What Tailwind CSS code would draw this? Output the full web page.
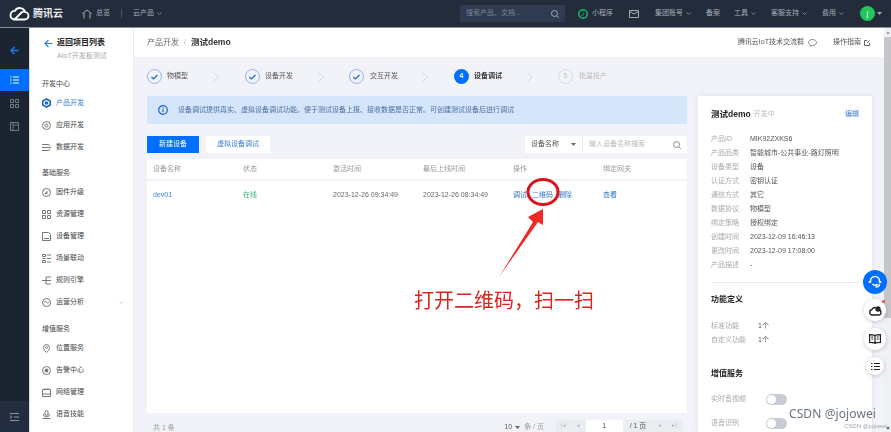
<!DOCTYPE html>
<html lang="zh-CN">
<head>
    <meta charset="UTF-8">
    <title>设备调试 - 腾讯云</title>
    <script src="https://cdn.jsdelivr.net/npm/@tailwindcss/browser@4"></script>
</head>
<body class="bg-[#f1f3f8]">
<div class="relative w-[891px] h-[432px] overflow-hidden flex flex-col whitespace-nowrap blur-[0.4px] font-['Liberation_Sans','Noto_Sans_CJK_SC',sans-serif] text-[7px] text-[#444]">

    <!-- top bar -->
    <header class="h-[28px] shrink-0 flex items-center bg-[#232c3b] border-b border-[#8a9099] text-[#a5acb8]">
        <svg class="ml-[9px] w-[21px] h-[15px] shrink-0" viewBox="0 0 21 15" fill="none" stroke="#fff" stroke-width="1.8"><path d="M5 13.500h10.500a3.700 3.700 0 0 0 .6-7.400A5.500 5.500 0 0 0 6 4.800 4.400 4.400 0 0 0 5 13.500zM5.500 13.500l7-7a3.500 3.500 0 0 1 4-.4"/></svg>
        <span class="ml-[3px] text-[10px] font-semibold text-[#e8eaee]">腾讯云</span>
        <svg class="ml-[19px] w-[10px] h-[10px] shrink-0" viewBox="0 0 10 10" fill="none" stroke="#a5acb8"><path d="M.5 4.500 5 1l4.500 3.500M2 4v5.500M8 4v5.500"/></svg>
        <span class="ml-[4px] w-[25px]">总览</span>
        <span class="w-px h-[9px] bg-[#4c5666]"></span>
        <span class="ml-[11px]">云产品</span>
        <svg class="ml-[3px] w-[5px] h-[3px] shrink-0" viewBox="0 0 5 3" fill="none" stroke="#7b8594"><path d="m.5.500 2 2 2-2"/></svg>
        <div class="ml-[298px] w-[105px] h-[17px] shrink-0 px-[6px] flex items-center justify-between bg-[#2f3b50] text-[#7b8594]">
            <span>搜索产品、文档...</span>
            <svg class="w-[8px] h-[8px]" viewBox="0 0 8 8" fill="none" stroke="#a5acb8"><circle cx="3.500" cy="3.500" r="3"/><path d="m5.800 5.800 2 2"/></svg>
        </div>
        <svg class="ml-[13px] w-[10px] h-[10px] shrink-0" viewBox="0 0 10 10" fill="none"><circle cx="5" cy="5" r="4.200" stroke="#17b26a" stroke-width="1.600"/><path d="M3.300 6.200c1.500.5 3-1 2.500-2.400" stroke="#17b26a"/></svg>
        <span class="ml-[4px]">小程序</span>
        <svg class="ml-[16px] w-[10px] h-[8px] shrink-0" viewBox="0 0 10 8" fill="none" stroke="#a5acb8"><path d="M.5.500h9v7h-9zM.5 1.500l4.500 2.500 4.500-2.500"/></svg>
        <span class="ml-[16px]">集团账号</span>
        <svg class="ml-[3px] w-[5px] h-[3px] shrink-0" viewBox="0 0 5 3" fill="none" stroke="#7b8594"><path d="m.5.500 2 2 2-2"/></svg>
        <span class="ml-[15px]">备案</span>
        <span class="ml-[14px]">工具</span>
        <svg class="ml-[3px] w-[5px] h-[3px] shrink-0" viewBox="0 0 5 3" fill="none" stroke="#7b8594"><path d="m.5.500 2 2 2-2"/></svg>
        <span class="ml-[15px]">客服支持</span>
        <svg class="ml-[3px] w-[5px] h-[3px] shrink-0" viewBox="0 0 5 3" fill="none" stroke="#7b8594"><path d="m.5.500 2 2 2-2"/></svg>
        <span class="ml-[15px]">费用</span>
        <svg class="ml-[3px] w-[5px] h-[3px] shrink-0" viewBox="0 0 5 3" fill="none" stroke="#7b8594"><path d="m.5.500 2 2 2-2"/></svg>
        <span class="ml-[16px] w-[15px] h-[15px] shrink-0 rounded-full bg-[#22c55e] text-white text-[8px] flex items-center justify-center">j</span>
        <svg class="ml-[2px] w-[5px] h-[3px] shrink-0" viewBox="0 0 5 3" fill="#a5acb8"><path d="M0 0h5L2.500 3z"/></svg>
    </header>

    <div class="flex-1 flex min-h-0">
        <!-- icon rail -->
        <nav class="w-[30px] shrink-0 flex flex-col bg-[#1b2431] border-r border-[#d9dce2]">
            <div class="h-[41px] flex items-center justify-center pt-[3px]">
                <svg class="w-[9px] h-[9px]" viewBox="0 0 9 9" fill="none" stroke="#1f7cf0" stroke-width="1.500"><path d="M8.500 4.500H1M4.500 1 1 4.500 4.500 8"/></svg>
            </div>
            <div class="h-[22px] flex items-center justify-center bg-[#006eff]">
                <svg class="w-[9px] h-[8px]" viewBox="0 0 9 8" fill="none" stroke="#fff" stroke-width="1.200"><path d="M0 1h1.500M3 1h6M0 4h1.500M3 4h6M0 7h1.500M3 7h6"/></svg>
            </div>
            <div class="h-[22px] mt-px flex items-center justify-center">
                <svg class="w-[9px] h-[9px]" viewBox="0 0 9 9" fill="none" stroke="#737b88"><path d="M.5.500h3v3h-3zM5.500.500h3v3h-3zM.5 5.500h3v3h-3zM5.500 5.500h3v3h-3z"/></svg>
            </div>
            <div class="h-[24px] flex items-center justify-center">
                <svg class="w-[9px] h-[9px]" viewBox="0 0 9 9" fill="none" stroke="#737b88"><path d="M.5.500h8v8h-8zM3 .5v8M3 3h5.500"/></svg>
            </div>
            <div class="mt-auto h-[31px] flex items-center justify-center bg-[#222e3f]">
                <svg class="w-[9px] h-[8px]" viewBox="0 0 9 8" fill="none" stroke="#8d95a2"><path d="M0 .5h9M4 4h5M0 7.500h9M0 2.500 2 4 0 5.500"/></svg>
            </div>
        </nav>

        <!-- side menu -->
        <aside class="w-[104px] shrink-0 bg-white border-r border-[#e8eaee]">
            <div class="h-[48px] pl-[14px] pt-[9px]">
                <div class="h-[12px] flex items-center gap-[4px] text-[8px] text-[#222] font-semibold">
                    <svg class="w-[9px] h-[9px]" viewBox="0 0 9 9" fill="none" stroke="#2b7de9" stroke-width="1.200"><path d="M8.500 4.500H1M4.500 1 1 4.500 4.500 8"/></svg>
                    返回项目列表
                </div>
                <div class="h-[13px] mt-[1px] pl-[13px] flex items-center text-[#aaa]">AIoT开发板测试</div>
            </div>
            <div class="h-[16px] pl-[12px] flex items-center">开发中心</div>
            <a class="h-[22px] pl-[12px] flex items-center gap-[5px] text-[#3b7fd9]">
                <svg class="w-[9px] h-[10px]" viewBox="0 0 9 10" fill="none" stroke="#1767c9" stroke-width="1.600"><path d="M4.500 1 8.200 3v4L4.500 9 .8 7V3z"/><circle cx="4.500" cy="5" r="1"/></svg>
                产品开发
            </a>
            <a class="h-[22px] pl-[12px] flex items-center gap-[5px]">
                <svg class="w-[9px] h-[9px]" viewBox="0 0 9 9" fill="none" stroke="#777"><circle cx="4.500" cy="4.500" r="4"/><circle cx="4.500" cy="4.500" r="1.500"/></svg>
                应用开发
            </a>
            <a class="h-[22px] pl-[12px] flex items-center gap-[5px]">
                <svg class="w-[9px] h-[9px]" viewBox="0 0 9 9" fill="none" stroke="#777"><path d="M0 1.500h6l2 1M0 4.500h9M0 7.500h6l2-1"/></svg>
                数据开发
            </a>
            <div class="h-[15px] mt-[8px] pl-[12px] flex items-center">基础服务</div>
            <a class="h-[22px] pl-[12px] flex items-center gap-[5px]">
                <svg class="w-[9px] h-[9px]" viewBox="0 0 9 9" fill="none" stroke="#777"><circle cx="4.500" cy="4.500" r="4"/><path d="M3 5.500 5 3.500v2z"/></svg>
                固件升级
            </a>
            <a class="h-[22px] pl-[12px] flex items-center gap-[5px]">
                <svg class="w-[9px] h-[9px]" viewBox="0 0 9 9" fill="none" stroke="#777"><path d="M.5.500h3v3h-3zM5.500.500h3v3h-3zM.5 5.500h3v3h-3zM5.500 5.500h3v3h-3z"/></svg>
                资源管理
            </a>
            <a class="h-[22px] pl-[12px] flex items-center gap-[5px]">
                <svg class="w-[9px] h-[9px]" viewBox="0 0 9 9" fill="none" stroke="#777"><path d="M.5.500h6l2 2v6h-8zM2 6.500h5"/></svg>
                设备管理
            </a>
            <a class="h-[22px] pl-[12px] flex items-center gap-[5px]">
                <svg class="w-[9px] h-[9px]" viewBox="0 0 9 9" fill="none" stroke="#777"><path d="M.5.500h3v2h-3zM.5 6.500h3v2h-3zM5 1h4M5 4.500h4M5 8h4M.5 4.500h3"/></svg>
                场景联动
            </a>
            <a class="h-[22px] pl-[12px] flex items-center gap-[5px]">
                <svg class="w-[9px] h-[9px]" viewBox="0 0 9 9" fill="none" stroke="#777"><path d="M0 4.500h4M4 1v7M4 1h5M4 4.500h5M4 8h5"/></svg>
                规则引擎
            </a>
            <a class="h-[22px] pl-[12px] pr-[10px] flex items-center gap-[5px]">
                <svg class="w-[9px] h-[9px]" viewBox="0 0 9 9" fill="none" stroke="#777"><circle cx="4.500" cy="4.500" r="4"/><path d="m2 4.500 1.500-1 2 1.500 1.500-1"/></svg>
                运营分析
                <svg class="ml-auto w-[4px] h-[3px]" viewBox="0 0 5 3" fill="none" stroke="#bbb"><path d="m.5.500 2 2 2-2"/></svg>
            </a>
            <div class="h-[16px] mt-[8px] pl-[12px] flex items-center">增值服务</div>
            <a class="h-[22px] pl-[12px] flex items-center gap-[5px]">
                <svg class="w-[9px] h-[9px]" viewBox="0 0 9 9" fill="none" stroke="#777"><path d="M4.500 8.500C2.500 6.500 1.500 5 1.500 3.500a3 3 0 0 1 6 0C7.500 5 6.500 6.500 4.500 8.500z"/><circle cx="4.500" cy="3.500" r="1"/></svg>
                位置服务
            </a>
            <a class="h-[22px] pl-[12px] flex items-center gap-[5px]">
                <svg class="w-[9px] h-[9px]" viewBox="0 0 9 9" fill="none" stroke="#777"><circle cx="4.500" cy="4.500" r="4"/><circle cx="4.500" cy="4.500" r="1.500" fill="#777"/></svg>
                告警中心
            </a>
            <a class="h-[22px] pl-[12px] flex items-center gap-[5px]">
                <svg class="w-[9px] h-[9px]" viewBox="0 0 9 9" fill="none" stroke="#777"><path d="M.5 1.500h8v7h-8zM.5 6h8M3 0v1.500M6 0v1.500"/></svg>
                网络管理
            </a>
            <a class="h-[22px] pl-[12px] flex items-center gap-[5px]">
                <svg class="w-[9px] h-[9px]" viewBox="0 0 9 9" fill="none" stroke="#777"><rect x="3" y=".5" width="3" height="5" rx="1.500"/><path d="M1.500 4a3 3 0 0 0 6 0M.5 8.500h8"/></svg>
                语音技能
            </a>
        </aside>

        <main class="flex-1 min-w-0 flex flex-col">
            <!-- page header -->
            <div class="h-[29px] shrink-0 pl-[13px] pr-[14px] flex items-center bg-white">
                <span class="text-[8px] text-[#666]">产品开发</span>
                <span class="mx-[5px] text-[#aaa]">/</span>
                <span class="text-[8.500px] font-bold text-[#333]">测试demo</span>
                <span class="ml-auto text-[#555]">腾讯云IoT技术交流群</span>
                <svg class="ml-[4px] w-[9px] h-[8px]" viewBox="0 0 9 8" fill="none" stroke="#888"><path d="M4.500.5c2.200 0 4 1.300 4 3s-1.800 3-4 3l-2 1V6C1.300 5.500.5 4.600.5 3.500c0-1.700 1.800-3 4-3z"/></svg>
                <span class="ml-[16px] text-[#555]">操作指南</span>
                <svg class="ml-[3px] w-[6px] h-[6px]" viewBox="0 0 6 6" fill="none" stroke="#666"><path d="M3 .5H.5v5h5V3M3 3 5.500.5"/></svg>
            </div>

            <!-- stepper -->
            <div class="h-[39px] shrink-0 pl-[13px] flex items-center text-[#555]">
                <div class="w-[98px] flex items-center gap-[5px]">
                    <span class="w-[15px] h-[15px] rounded-full border border-[#8fb4e6] flex items-center justify-center"><svg class="w-[7px] h-[6px]" viewBox="0 0 7 6" fill="none" stroke="#1767c9" stroke-width="1.200"><path d="m.5 3 2 2L6.500 1"/></svg></span>
                    物模型
                    <svg class="ml-auto mr-[26px] w-[6px] h-[10px]" viewBox="0 0 6 10" fill="none" stroke="#d4d7de"><path d="m.5.500 5 4.500-5 4.500"/></svg>
                </div>
                <div class="w-[104px] flex items-center gap-[5px]">
                    <span class="w-[15px] h-[15px] rounded-full border border-[#8fb4e6] flex items-center justify-center"><svg class="w-[7px] h-[6px]" viewBox="0 0 7 6" fill="none" stroke="#1767c9" stroke-width="1.200"><path d="m.5 3 2 2L6.500 1"/></svg></span>
                    设备开发
                    <svg class="ml-auto mr-[25px] w-[6px] h-[10px]" viewBox="0 0 6 10" fill="none" stroke="#d4d7de"><path d="m.5.500 5 4.500-5 4.500"/></svg>
                </div>
                <div class="w-[105px] flex items-center gap-[6px]">
                    <span class="w-[15px] h-[15px] rounded-full border border-[#8fb4e6] flex items-center justify-center"><svg class="w-[7px] h-[6px]" viewBox="0 0 7 6" fill="none" stroke="#1767c9" stroke-width="1.200"><path d="m.5 3 2 2L6.500 1"/></svg></span>
                    交互开发
                    <svg class="ml-auto mr-[26px] w-[6px] h-[10px]" viewBox="0 0 6 10" fill="none" stroke="#d4d7de"><path d="m.5.500 5 4.500-5 4.500"/></svg>
                </div>
                <div class="w-[104px] flex items-center gap-[5px] font-semibold text-[#333]">
                    <span class="w-[15px] h-[15px] rounded-full bg-[#006eff] text-white flex items-center justify-center">4</span>
                    设备调试
                    <svg class="ml-auto mr-[25px] w-[6px] h-[10px]" viewBox="0 0 6 10" fill="none" stroke="#d4d7de"><path d="m.5.500 5 4.500-5 4.500"/></svg>
                </div>
                <div class="flex items-center gap-[6px] text-[#bbb]">
                    <span class="w-[15px] h-[15px] rounded-full border border-[#d4d7de] flex items-center justify-center">5</span>
                    批量投产
                </div>
            </div>

            <div class="flex-1 min-h-0 flex">
                <!-- device list -->
                <section class="w-[540px] ml-[13px] shrink-0 flex flex-col">
                    <div class="h-[28px] shrink-0 pl-[11px] flex items-center gap-[10px] bg-[#d5e6fb] text-[#4c6f9e]">
                        <svg class="w-[10px] h-[10px]" viewBox="0 0 10 10" fill="none" stroke="#1767c9" stroke-width="1.200"><circle cx="5" cy="5" r="4.300"/><path d="M5 4.300v3M5 2.300v1"/></svg>
                        设备调试提供真实、虚拟设备调试功能。便于测试设备上报、接收数据是否正常。可创建测试设备后进行调试
                    </div>
                    <div class="h-[17px] mt-[12px] shrink-0 flex items-stretch">
                        <button class="w-[52px] bg-[#006eff] text-white">新建设备</button>
                        <button class="w-[64px] ml-[7px] bg-white text-[#3b7fd9]">虚拟设备调试</button>
                        <div class="ml-auto w-[58px] px-[6px] flex items-center justify-between bg-white border-r border-[#e8eaee] text-[#555]">设备名称
                            <svg class="w-[5px] h-[3px]" viewBox="0 0 5 3" fill="#666"><path d="M0 0h5L2.500 3z"/></svg>
                        </div>
                        <div class="w-[104px] px-[6px] flex items-center justify-between bg-white text-[#bbb]">输入设备名称搜索
                            <svg class="w-[8px] h-[8px]" viewBox="0 0 8 8" fill="none" stroke="#888"><circle cx="3.500" cy="3.500" r="3"/><path d="m5.800 5.800 2 2"/></svg>
                        </div>
                    </div>
                    <div class="h-[254px] mt-[6px] shrink-0 bg-white">
                        <div class="h-[22px] pl-[6px] grid grid-cols-[90px_90px_90px_90px_90px_1fr] items-center border-b-2 border-[#f1f3f8] text-[#999]">
                            <span>设备名称</span><span>状态</span><span>激活时间</span><span>最后上线时间</span><span>操作</span><span>绑定网关</span>
                        </div>
                        <div class="h-[28px] pl-[6px] grid grid-cols-[90px_90px_90px_90px_90px_1fr] items-center text-[#666]">
                            <span class="text-[#3b7fd9]">dev01</span>
                            <span class="text-[#3fae78]">在线</span>
                            <span>2023-12-26 09:34:49</span>
                            <span>2023-12-26 08:34:49</span>
                            <span class="flex gap-[5px] text-[#2f73c9]"><span>调试</span><span>二维码</span><span>删除</span></span>
                            <span class="text-[#2f73c9]">查看</span>
                        </div>
                    </div>
                    <!-- pagination -->
                    <div class="flex-1 pl-[6px] pt-[7px] flex items-start text-[#999]">
                        <span class="mt-[3px]">共 1 条</span>
                        <span class="ml-auto mt-[2px] flex items-center gap-[3px] h-[10px] text-[#666]">10
                            <svg class="w-[5px] h-[3px]" viewBox="0 0 5 3" fill="#666"><path d="M0 0h5L2.500 3z"/></svg>
                        </span>
                        <span class="ml-[4px] mt-[2px]">条 / 页</span>
                        <div class="ml-[12px] mr-[5px] flex items-center h-[12px] text-[#aaa] text-[5px]">
                            <span class="w-[15px] h-full flex items-center justify-center bg-[#e9ecf1]">|◂</span>
                            <span class="w-[15px] h-full flex items-center justify-center bg-[#e9ecf1]">◂</span>
                            <span class="w-[37px] h-full flex items-center justify-center bg-white text-[7px] text-[#555]">1</span>
                            <span class="w-[30px] h-full flex items-center justify-center bg-[#e9ecf1] text-[7px] text-[#555]">/ 1 页</span>
                            <span class="w-[14px] h-full flex items-center justify-center bg-[#e9ecf1]">▸</span>
                            <span class="w-[15px] h-full flex items-center justify-center bg-[#e9ecf1]">▸|</span>
                        </div>
                    </div>
                </section>

                <!-- product panel -->
                <section class="w-[174px] ml-[11px] shrink-0 px-[13px] pt-[12px] bg-white shadow-[0_0_6px_rgba(0,0,0,0.08)]">
                    <div class="h-[12px] flex items-center">
                        <span class="text-[8.500px] font-bold text-[#222]">测试demo</span>
                        <span class="ml-[3px] text-[#bbb]">开发中</span>
                        <span class="ml-auto text-[#3b7fd9]">编辑</span>
                    </div>
                    <dl class="mt-[12px] grid grid-cols-[39px_1fr] auto-rows-[14px] items-center text-[#555]">
                        <dt class="text-[#aaa]">产品ID</dt><dd>MIK92ZXKS6</dd>
                        <dt class="text-[#aaa]">产品品类</dt><dd>智能城市-公共事业-路灯照明</dd>
                        <dt class="text-[#aaa]">设备类型</dt><dd>设备</dd>
                        <dt class="text-[#aaa]">认证方式</dt><dd>密钥认证</dd>
                        <dt class="text-[#aaa]">通信方式</dt><dd>其它</dd>
                        <dt class="text-[#aaa]">数据协议</dt><dd>物模型</dd>
                        <dt class="text-[#aaa]">绑定策略</dt><dd>授权绑定</dd>
                        <dt class="text-[#aaa]">创建时间</dt><dd>2023-12-09 16:46:13</dd>
                        <dt class="text-[#aaa]">更改时间</dt><dd>2023-12-09 17:08:00</dd>
                        <dt class="text-[#aaa]">产品描述</dt><dd>-</dd>
                    </dl>
                    <div class="mt-[10px] border-t border-[#e8eaee]"></div>
                    <h3 class="mt-[11px] h-[12px] flex items-center text-[8px] font-bold text-[#222]">功能定义</h3>
                    <dl class="mt-[13px] grid grid-cols-[47px_1fr] auto-rows-[14px] items-center text-[#555]">
                        <dt class="text-[#aaa]">标准功能</dt><dd>1个</dd>
                        <dt class="text-[#aaa]">自定义功能</dt><dd>1个</dd>
                    </dl>
                    <h3 class="mt-[21px] h-[12px] flex items-center text-[8px] font-bold text-[#222]">增值服务</h3>
                    <div class="mt-[13px] h-[13px] flex items-center text-[#aaa]">
                        <span class="w-[55px]">实时音视频</span>
                        <span class="w-[21px] h-[11px] rounded-full bg-[#c6ccd6] p-[1px]"><span class="block w-[9px] h-[9px] rounded-full bg-white"></span></span>
                    </div>
                    <div class="mt-[11px] h-[13px] flex items-center text-[#aaa]">
                        <span class="w-[55px]">语音识别</span>
                        <span class="w-[21px] h-[11px] rounded-full bg-[#c6ccd6] p-[1px]"><span class="block w-[9px] h-[9px] rounded-full bg-white"></span></span>
                    </div>
                </section>
            </div>
        </main>

        <!-- page scrollbar -->
        <div class="w-[7px] shrink-0 flex flex-col bg-[#eef0f3]">
            <div class="h-[9px] flex items-center justify-center">
                <svg class="w-[4px] h-[3px]" viewBox="0 0 5 3" fill="#999"><path d="M0 3h5L2.500 0z"/></svg>
            </div>
            <div class="h-[281px] bg-[#c4c6ca]"></div>
            <div class="mt-auto h-[7px] flex items-center justify-center">
                <svg class="w-[4px] h-[3px]" viewBox="0 0 5 3" fill="#555"><path d="M0 0h5L2.500 3z"/></svg>
            </div>
        </div>
    </div>

    <!-- floating help buttons -->
    <div class="absolute left-[863px] top-[270px] w-[24px] h-[24px] rounded-full bg-[#006eff] flex items-center justify-center">
        <svg class="w-[14px] h-[14px]" viewBox="0 0 14 14" fill="none" stroke="#fff" stroke-width="1.500"><path d="M2.500 8V6a4.500 4.500 0 0 1 9 0v2M4.500 9c1.500 1.500 3.500 1.500 5 0M1.500 6v2M12.500 6v2M11.500 9c0 2-1.500 3-4 3"/></svg>
    </div>
    <div class="absolute left-[864px] top-[299px] w-[22px] h-[22px] rounded-full bg-white shadow-[0_1px_4px_rgba(0,0,0,0.2)] flex items-center justify-center">
        <svg class="w-[14px] h-[11px]" viewBox="0 0 14 11" fill="none" stroke="#222" stroke-width="1.300"><path d="M4 10h6.500a2.500 2.500 0 0 0 0-5A3.500 3.500 0 0 0 4 4.500 2.800 2.800 0 0 0 4 10z"/><circle cx="10" cy="4" r="2" fill="#222"/></svg>
    </div>
    <span class="absolute left-[882px] top-[300px] w-[3px] h-[3px] rounded-full bg-[#e54545]"></span>
    <div class="absolute left-[864px] top-[328px] w-[22px] h-[22px] rounded-full bg-white shadow-[0_1px_4px_rgba(0,0,0,0.2)] flex items-center justify-center">
        <svg class="w-[12px] h-[10px]" viewBox="0 0 12 10" fill="none" stroke="#222" stroke-width="1.200"><path d="M6 1.500C5 .8 2.500.6.600.6v7.800c2 0 4.400.2 5.400 1 1-.8 3.400-1 5.400-1V.6C9.500.6 7 .8 6 1.500zM6 1.500v7.900M2.300 3h2M2.300 5h2M7.700 3h2M7.700 5h2"/></svg>
    </div>
    <div class="absolute left-[866px] top-[357px] w-[18px] h-[18px] rounded-full bg-white shadow-[0_1px_4px_rgba(0,0,0,0.2)] flex items-center justify-center">
        <svg class="w-[9px] h-[7px]" viewBox="0 0 9 7" fill="none" stroke="#222"><path d="M0 .5h1.500M3 .5h6M0 3.500h1.500M3 3.500h6M0 6.500h1.500M3 6.500h6"/></svg>
    </div>

    <!-- red annotation over the screenshot -->
    <svg class="absolute left-0 top-0 w-[891px] h-[432px] pointer-events-none" viewBox="0 0 891 432" fill="none">
        <ellipse cx="543" cy="192" rx="15" ry="12.500" stroke="#d9131a" stroke-width="3"/>
        <path d="M499 277 533 222 528 217 543 209 543 225 538 222 Z" fill="#ee2a24"/>
    </svg>
    <div class="absolute left-[414px] top-[286px] text-[20px] leading-[28px] text-[#d8251d] font-['Noto_Sans_CJK_SC',sans-serif]">打开二维码，扫一扫</div>

    <!-- watermark -->
    <div class="absolute left-[789px] top-[408px] text-[12px] leading-[12px] tracking-[0.1px] text-[#6b7280] font-['Noto_Sans',sans-serif]">CSDN @jojowei</div>
    <div class="absolute left-[844px] top-[423px] text-[6px] leading-[6px] text-[#9ca3af]">CSDN @jojowei</div>
</div>
</body>
</html>
